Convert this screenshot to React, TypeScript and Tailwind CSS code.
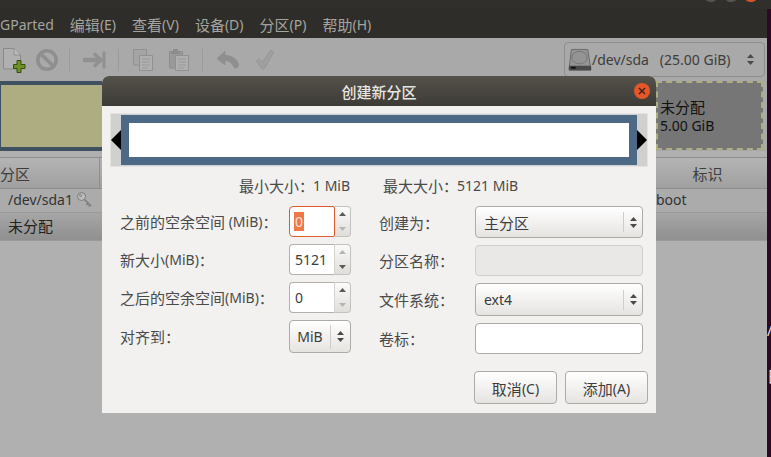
import React from "react";

const font = { fontFamily: '"Noto Sans", "Noto Sans CJK SC", sans-serif' };

function T({ children }: { children: string }) {
  const parts = children.split(/([\u3000-\u9fff\uff00-\uffef]+)/);
  return (
    <>
      {parts.map((p, i) =>
        i % 2 === 1 ? (
          <span key={i} className="text-[15px] relative top-[1px]">{p}</span>
        ) : (
          <span key={i} className="whitespace-pre">{p}</span>
        )
      )}
    </>
  );
}

function Tri({ up, color }: { up?: boolean; color: string }) {
  return (
    <svg width="7" height="4" viewBox="0 0 7 4">
      <path d={up ? "M3.5 0L7 4H0Z" : "M0 0H7L3.5 4Z"} fill={color} />
    </svg>
  );
}

function Updown() {
  return (
    <div className="flex flex-col gap-[3px] items-center">
      <Tri up color="#4a4a4a" />
      <Tri color="#4a4a4a" />
    </div>
  );
}

function Spin({ value, focused, upDim }: { value: string; focused?: boolean; upDim?: boolean }) {
  return (
    <div className="flex w-[62px] h-[31px]">
      <div className={`flex-1 flex items-center pl-[4px] text-[14px] text-[#3c3c3c] bg-white rounded-l-[4px] border ${focused ? "border-[#e05a2b] rounded-r-[2px]" : "border-[#b3b0ab] border-r-[#d5d3cf]"}`}>
        {focused ? <span className="bg-[#f07746] text-[#fbe3d8] leading-[19px] px-[1px]">{value}</span> : <span className="px-[1px]">{value}</span>}
      </div>
      <div className="w-[16px] rounded-r-[4px] border border-l-0 border-[#c4c2be] flex flex-col bg-gradient-to-b from-[#fbfbfa] to-[#e0dedb]">
        <div className="flex-1 flex items-center justify-center"><Tri up color={upDim ? "#b5b5b5" : "#5a5a5a"} /></div>
        <div className="flex-1 flex items-center justify-center"><Tri color={upDim ? "#5a5a5a" : "#b5b5b5"} /></div>
      </div>
    </div>
  );
}

function Combo({ value, h }: { value: string; h: string }) {
  return (
    <div className={`flex items-center w-[168px] rounded-[4px] border border-[#aeaba6] bg-gradient-to-b from-white to-[#e6e4e1] text-[14px] text-[#3c3c3c] ${h}`}>
      <span className="flex-1 pl-[8px]"><T>{value}</T></span>
      <div className="w-[19px] h-[20px] border-l border-[#d0cdc9] flex items-center justify-center"><Updown /></div>
    </div>
  );
}

function Btn({ children }: { children: string }) {
  return (
    <div className="w-[83px] h-[33px] pt-[2px] rounded-[4px] border border-[#aeaba6] bg-gradient-to-b from-white to-[#e6e4e1] flex items-center justify-center text-[14px] text-[#3c3c3c]">
      <span><T>{children}</T></span>
    </div>
  );
}

function Sep() {
  return <div className="w-px h-[22px] bg-[#9a9a9a]" />;
}

function Toolbar() {
  const s = "#919191";
  return (
    <div className="h-[43px] bg-[#a9a9a9] flex items-center pr-[2px] shrink-0">
      <div className="flex items-center">
        <svg width="24" height="26" viewBox="0 0 24 26" className="ml-[2px]">
          <path d="M1.5 1.5H12L18.5 8V22H1.5Z" fill="#b0b0b0" stroke="#8a8a8a" />
          <path d="M12 1.5V8H18.5" fill="#bcbcbc" stroke="#8f8f8f" />
          <path d="M15 13.5H19V17.5H23V21.5H19V25.5H15V21.5H11.5V17.5H15Z" fill="#6d9027" stroke="#35500f" />
        </svg>
        <svg width="24" height="24" viewBox="0 0 24 24" className="ml-[9px]">
          <circle cx="12" cy="12" r="9.2" fill="none" stroke="#8f8f8f" strokeWidth="3.6" />
          <path d="M5.5 5.5L18.5 18.5" stroke="#8f8f8f" strokeWidth="3.6" />
        </svg>
        <div className="ml-[10px]"><Sep /></div>
        <svg width="24" height="22" viewBox="0 0 24 22" className="ml-[13px]">
          <path d="M1 11H17" stroke={s} strokeWidth="4.5" strokeLinecap="round" />
          <path d="M11 4.5L18 11L11 17.5" fill="none" stroke={s} strokeWidth="3.6" />
          <path d="M21 2.5V19.5" stroke={s} strokeWidth="3" />
        </svg>
        <div className="ml-[11px]"><Sep /></div>
        <svg width="22" height="24" viewBox="0 0 22 24" className="ml-[13px]">
          <path d="M1.5 1.5H14.5V17H1.5Z" fill="#a4a4a4" stroke={s} />
          <path d="M7.5 7.5H20.5V22.5H7.5Z" fill="#afafaf" stroke={s} />
          <path d="M10 11H18M10 14H18M10 17H18M10 20H16" stroke="#999999" />
        </svg>
        <svg width="22" height="24" viewBox="0 0 22 24" className="ml-[14px]">
          <path d="M1.5 3.5H14.5V20H1.5Z" fill="#999999" stroke="#8e8e8e" />
          <path d="M5 3V1H10V3H12V6H3V3Z" fill="#8c8c8c" />
          <path d="M7.5 7.5H20.5V22.5H7.5Z" fill="#afafaf" stroke={s} />
          <path d="M10 11H18M10 14H18M10 17H18M10 20H16" stroke="#999999" />
        </svg>
        <div className="ml-[12px]"><Sep /></div>
        <svg width="24" height="20" viewBox="0 0 24 20" className="ml-[13px]">
          <path d="M9 1.5L1 8.5L9 15V10.5C13 10.5 16 12.5 18 17.5C20.5 18.5 23 17 22.5 14.5C21 9 16 5.5 9 5.5Z" fill="#8f8f8f" stroke="#8f8f8f" strokeLinejoin="round" />
        </svg>
        <svg width="20" height="22" viewBox="0 0 20 22" className="ml-[15px]">
          <path d="M1.5 12L7 19.5C8 20 9 20 9.5 19L18.5 3.5C18 2 16 1 15 2L7.5 13.5L4 10Z" fill="#a0a0a0" stroke="#959595" strokeLinejoin="round" />
        </svg>
      </div>
      <div className="flex-1" />
      <div className="w-[201px] h-[35px] rounded-[4px] border border-[#8e8e8e] flex items-center text-[14px] text-[#3d3d3d]">
        <svg width="24" height="24" viewBox="0 0 25 24" className="ml-[3px]">
          <path d="M3.5 1H20.5L24 22H1Z" fill="#949494" stroke="#6a6a6a" />
          <ellipse cx="12" cy="9.5" rx="8" ry="6.5" fill="none" stroke="#757575" />
          <path d="M1 18H24V23H1Z" fill="#4a4a4a" />
          <path d="M3 20H8" stroke="#111111" strokeWidth="2" />
        </svg>
        <span className="whitespace-pre">/dev/sda   (25.00 GiB)</span>
        <div className="flex-1" />
        <div className="mr-[10px]"><Updown /></div>
      </div>
    </div>
  );
}

function Row({ label, children }: { label: string; children: React.ReactNode }) {
  return (
    <div className="flex items-center justify-between">
      <span className="text-[14px] text-[#4a4a4a] whitespace-nowrap"><T>{label}</T></span>
      {children}
    </div>
  );
}

export default function App() {
  return (
    <div style={font} className="relative w-[771px] h-[457px] overflow-hidden bg-[#2c0a24] flex flex-col">
      <div className="h-[9px] bg-[#302f2b] shrink-0 relative overflow-hidden">
        <div className="absolute left-[691px] -top-[8px] w-[80px] h-[10px]">
          <div className="absolute left-[14px] top-0 w-[12px] h-[10px] rounded-full bg-[#55544f]" />
          <div className="absolute left-[34px] top-0 w-[12px] h-[10px] rounded-full bg-[#55544f]" />
          <div className="absolute left-[54px] top-0 w-[12px] h-[10px] rounded-full bg-[#d9532a]" />
        </div>
      </div>
      <div className="flex-1 flex">
        <div className="w-[767px] h-full flex flex-col bg-[#b0b0b0] shrink-0">
          <div className="h-[29px] bg-[#2e2d29] flex items-center gap-[16px] pt-[1px] text-[14px] text-[#a5a49f] shrink-0 whitespace-nowrap">
            <span>GParted</span>
            <span><T>编辑(E)</T></span>
            <span><T>查看(V)</T></span>
            <span><T>设备(D)</T></span>
            <span><T>分区(P)</T></span>
            <span><T>帮助(H)</T></span>
          </div>
          <Toolbar />
          <div className="h-[70px] flex items-stretch pr-[4px] shrink-0 bg-[#a9a9a9]">
            <div className="flex-1 bg-[#aead82] border-[#3f5061] border-t-[4px] border-b-[4px] border-l" />
            <div className="w-[107px] mb-[1px] bg-[#767676] border-2 border-dashed border-[#aead82] text-[14px] text-[#111111] pt-[14px] pl-[2px] leading-[19px]">
              <div><T>未分配</T></div>
              <div>5.00 GiB</div>
            </div>
          </div>
          <div className="h-[32px] mt-[6px] flex text-[14px] text-[#3d3d3d] bg-gradient-to-b from-[#b4b4b4] to-[#a0a0a0] border-y border-[#8e8e8e] items-center shrink-0">
            <span className="w-[100px] border-r border-[#8e8e8e] h-full flex items-center"><T>分区</T></span>
            <div className="flex-1" />
            <span className="w-[119px] text-center"><T>标识</T></span>
          </div>
          <div className="h-[23px] pb-[2px] flex items-center text-[14px] text-[#333333] bg-[#ababab] pl-[8px] shrink-0">
            <span>/dev/sda1</span>
            <svg width="17" height="17" viewBox="0 0 17 17" className="ml-[3px]">
              <circle cx="5.5" cy="5.5" r="4" fill="#bdbdbd" stroke="#7d7d7d" />
              <circle cx="4.5" cy="4.5" r="1.2" fill="#ababab" stroke="#7d7d7d" strokeWidth="0.7" />
              <path d="M8.5 8.5L15 15M12 12L10.5 14M14 14L12.5 15.5" stroke="#7d7d7d" strokeWidth="1.6" />
            </svg>
            <div className="flex-1" />
            <span className="w-[111px]">boot</span>
          </div>
          <div className="h-[29px] pb-[2px] flex items-center text-[14px] text-[#222222] bg-gradient-to-b from-[#a6a6a6] to-[#909090] border-y border-[#9a9a9a] pl-[8px] shrink-0"><T>未分配</T></div>
        </div>
        <div className="flex-1 relative overflow-hidden text-[#e8e8e8] text-[14px]">
          <span className="absolute left-0 top-[311px]">/</span>
          <span className="absolute left-0 top-[355px]"><T>日</T></span>
        </div>
      </div>

      <div className="absolute left-[102px] top-[76px] w-[554px] h-[337px] bg-[#f2f1ef] rounded-t-[7px] overflow-hidden flex flex-col">
        <div className="h-[30px] bg-gradient-to-b from-[#55524b] to-[#3d3b36] flex items-center justify-center relative shrink-0">
          <span className="text-[14px] font-medium text-[#e8e6e1]"><T>创建新分区</T></span>
          <div className="absolute right-[6px] top-[7px] w-[16px] h-[16px] rounded-full bg-[#e4572a] flex items-center justify-center">
            <svg width="8" height="8" viewBox="0 0 8 8"><path d="M1 1L7 7M7 1L1 7" stroke="#3a2018" strokeWidth="1.4" /></svg>
          </div>
        </div>
        <div className="mx-[8px] mt-[7px] h-[54px] border border-[#e4e3e0] bg-[#d0d0d0] px-[10px] py-[1px] relative">
          <div className="h-full bg-[#4c6a85] px-[8px] py-[8px]"><div className="h-full bg-white" /></div>
          <svg width="10" height="20" viewBox="0 0 10 20" className="absolute left-0 top-[16px]"><path d="M10 0V20L0 10Z" fill="#000" /></svg>
          <svg width="10" height="20" viewBox="0 0 10 20" className="absolute right-0 top-[16px]"><path d="M0 0V20L10 10Z" fill="#000" /></svg>
        </div>
        <div className="mt-[8px] h-[20px] flex items-center text-[14px] text-[#4a4a4a] pl-[137px]">
          <span className="w-[144px] whitespace-pre"><T>最小大小：</T><span className="-ml-[1px]">1 MiB</span></span>
          <span className="whitespace-pre"><T>最大大小：</T><span className="-ml-[1px]">5121 MiB</span></span>
        </div>
        <div className="flex pl-[18px] pr-[13px] mt-[11px] gap-[28px]">
          <div className="w-[231px] flex flex-col gap-[7px]">
            <Row label="之前的空余空间 (MiB)："><Spin value="0" focused /></Row>
            <Row label="新大小(MiB)："><Spin value="5121" upDim /></Row>
            <Row label="之后的空余空间(MiB)："><Spin value="0" /></Row>
            <Row label="对齐到：">
              <div className="w-[62px] h-[33px] rounded-[4px] border border-[#aeaba6] bg-gradient-to-b from-white to-[#e6e4e1] flex items-center text-[14px] text-[#3c3c3c]">
                <span className="w-[40px] text-center">MiB</span>
                <div className="flex-1 h-[24px] border-l border-[#d0cdc9] flex items-center justify-center"><Updown /></div>
              </div>
            </Row>
          </div>
          <div className="flex-1 flex flex-col gap-[7px]">
            <Row label="创建为："><Combo value="主分区" h="h-[32px]" /></Row>
            <Row label="分区名称："><div className="w-[168px] h-[31px] rounded-[4px] border border-[#d0cec9] bg-[#e9e8e6]" /></Row>
            <Row label="文件系统："><Combo value="ext4" h="h-[33px]" /></Row>
            <Row label="卷标："><div className="w-[168px] h-[31px] rounded-[4px] border border-[#aeaba6] bg-white" /></Row>
          </div>
        </div>
        <div className="flex justify-end gap-[8px] pr-[8px] mt-[17px]">
          <Btn>取消(C)</Btn>
          <Btn>添加(A)</Btn>
        </div>
      </div>
    </div>
  );
}
